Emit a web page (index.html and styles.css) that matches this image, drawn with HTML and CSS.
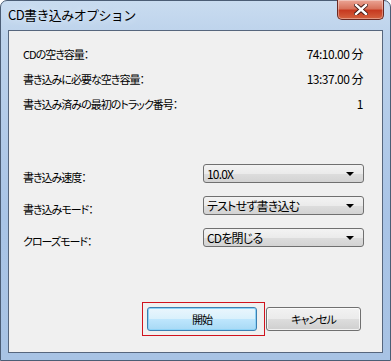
FILE: index.html
```html
<!DOCTYPE html>
<html lang="ja">
<head>
    <meta charset="UTF-8">
    <meta name="viewport" content="width=device-width, initial-scale=1.0">
    <title>CD書き込みオプション</title>
    <link rel="stylesheet" href="styles.css">
</head>
<body>
    <div class="window">
        <div class="titlebar">
            <span class="title">CD書き込みオプション</span>
            <button class="close">
                <svg width="14" height="11" viewBox="0 0 14 11">
                    <path d="M2 1 L12 10 M12 1 L2 10" stroke="#3a1410" stroke-width="4.2" stroke-linecap="square"/>
                    <path d="M2 1 L12 10 M12 1 L2 10" stroke="#fff" stroke-width="2.4" stroke-linecap="square"/>
                </svg>
            </button>
        </div>
        <div class="client">
            <div class="info">
                <div class="row">
                    <span>CDの空き容量：</span>
                    <span class="value">74:10.00 分</span>
                </div>
                <div class="row">
                    <span>書き込みに必要な空き容量：</span>
                    <span class="value">13:37.00 分</span>
                </div>
                <div class="row">
                    <span>書き込み済みの最初のトラック番号：</span>
                    <span class="value">1</span>
                </div>
            </div>

            <div class="settings">
                <div class="setting">
                    <span class="label">書き込み速度：</span>
                    <div class="combo"><span>10.0X</span><i class="arrow"></i></div>
                </div>
                <div class="setting">
                    <span class="label">書き込みモード：</span>
                    <div class="combo"><span>テストせず書き込む</span><i class="arrow"></i></div>
                </div>
                <div class="setting">
                    <span class="label">クローズモード：</span>
                    <div class="combo"><span>CDを閉じる</span><i class="arrow"></i></div>
                </div>
            </div>

            <div class="buttons">
                <div class="focus">
                    <button class="btn btn-default">開始</button>
                </div>
                <button class="btn">キャンセル</button>
            </div>
        </div>
    </div>
</body>
</html>
```

FILE: styles.css
```css
body {
    margin: 0;
    background: #fff;
    font-family: "Noto Sans CJK JP", "Liberation Sans", sans-serif;
    color: #000;
}

.window {
    width: 391px;
    height: 361px;
    box-sizing: border-box;
    border: 1px solid #4b5d75;
    border-radius: 7px 7px 0 0;
    background: linear-gradient(180deg, #c9dcf0 0%, #bcd2eb 10%, #a9c4e6 60%, #a8c3e4 100%);
    display: flex;
    flex-direction: column;
}

.titlebar {
    height: 29px;
    display: flex;
    align-items: flex-start;
    position: relative;
}

.title {
    margin: 5px 0 0 7px;
    font-size: 13px;
    line-height: 18px;
    letter-spacing: -0.6px;
    text-shadow: 0 0 6px #e6f0fa;
}

.close {
    position: absolute;
    right: 6px;
    top: -1px;
    width: 47px;
    height: 20px;
    padding: 0;
    border: 1px solid #6b2a22;
    border-top: none;
    border-radius: 0 0 5px 5px;
    background: linear-gradient(180deg, #eba595 0%, #d8735c 45%, #c73a20 55%, #d4623f 100%);
    box-shadow: inset 0 0 0 1px rgba(255, 255, 255, 0.35);
    display: flex;
    align-items: center;
    justify-content: center;
}

.client {
    margin: 0 7px 7px 7px;
    flex: 1;
    border: 1px solid #56667d;
    background: #f0f0f0;
    display: flex;
    flex-direction: column;
    font-size: 11px;
    letter-spacing: -1px;
    font-feature-settings: "palt";
}

.info {
    padding: 10px 19px 0 14px;
}

.row {
    height: 25px;
    display: flex;
    align-items: center;
    justify-content: space-between;
}

.value {
    font-size: 12px;
    letter-spacing: -0.5px;
}

.settings {
    margin-top: 48px;
    padding: 0 18px 0 14px;
}

.setting {
    height: 32px;
    display: flex;
    justify-content: space-between;
    align-items: flex-start;
}

.label {
    padding-top: 4px;
    line-height: 18px;
}

.combo {
    width: 161px;
    height: 19px;
    box-sizing: border-box;
    border: 1px solid #707070;
    border-radius: 3px;
    background: linear-gradient(180deg, #f3f3f3 0%, #ebebeb 50%, #dddddd 51%, #d3d3d3 100%);
    display: flex;
    align-items: center;
    justify-content: space-between;
    padding: 0 9px 0 3px;
    font-size: 12px;
    letter-spacing: -0.8px;
}

.arrow {
    width: 0;
    height: 0;
    border-left: 4px solid transparent;
    border-right: 4px solid transparent;
    border-top: 4px solid #000;
}

.buttons {
    margin-top: 42px;
    padding-left: 133px;
    display: flex;
    align-items: center;
}

.focus {
    border: 1px solid #d0131d;
    padding: 4px 7px 4px 4px;
    display: flex;
}

.btn {
    height: 24px;
    width: 95px;
    margin-left: 1px;
    border: 1px solid #707070;
    border-radius: 3px;
    background: linear-gradient(180deg, #f2f2f2 0%, #ebebeb 50%, #dddddd 51%, #cfcfcf 100%);
    box-shadow: inset 0 0 0 1px rgba(255, 255, 255, 0.7);
    font-family: inherit;
    font-size: 11px;
    letter-spacing: -1px;
    font-feature-settings: "palt";
    color: #000;
    padding: 0;
}

.btn-default {
    width: 110px;
    margin-left: 0;
    border-color: #3c7fb1;
    background: linear-gradient(180deg, #eaf6fd 0%, #d9f0fc 50%, #bee6fd 51%, #a7d9f5 100%);
    box-shadow: inset 0 0 0 1px #8ed3f7;
}
```
